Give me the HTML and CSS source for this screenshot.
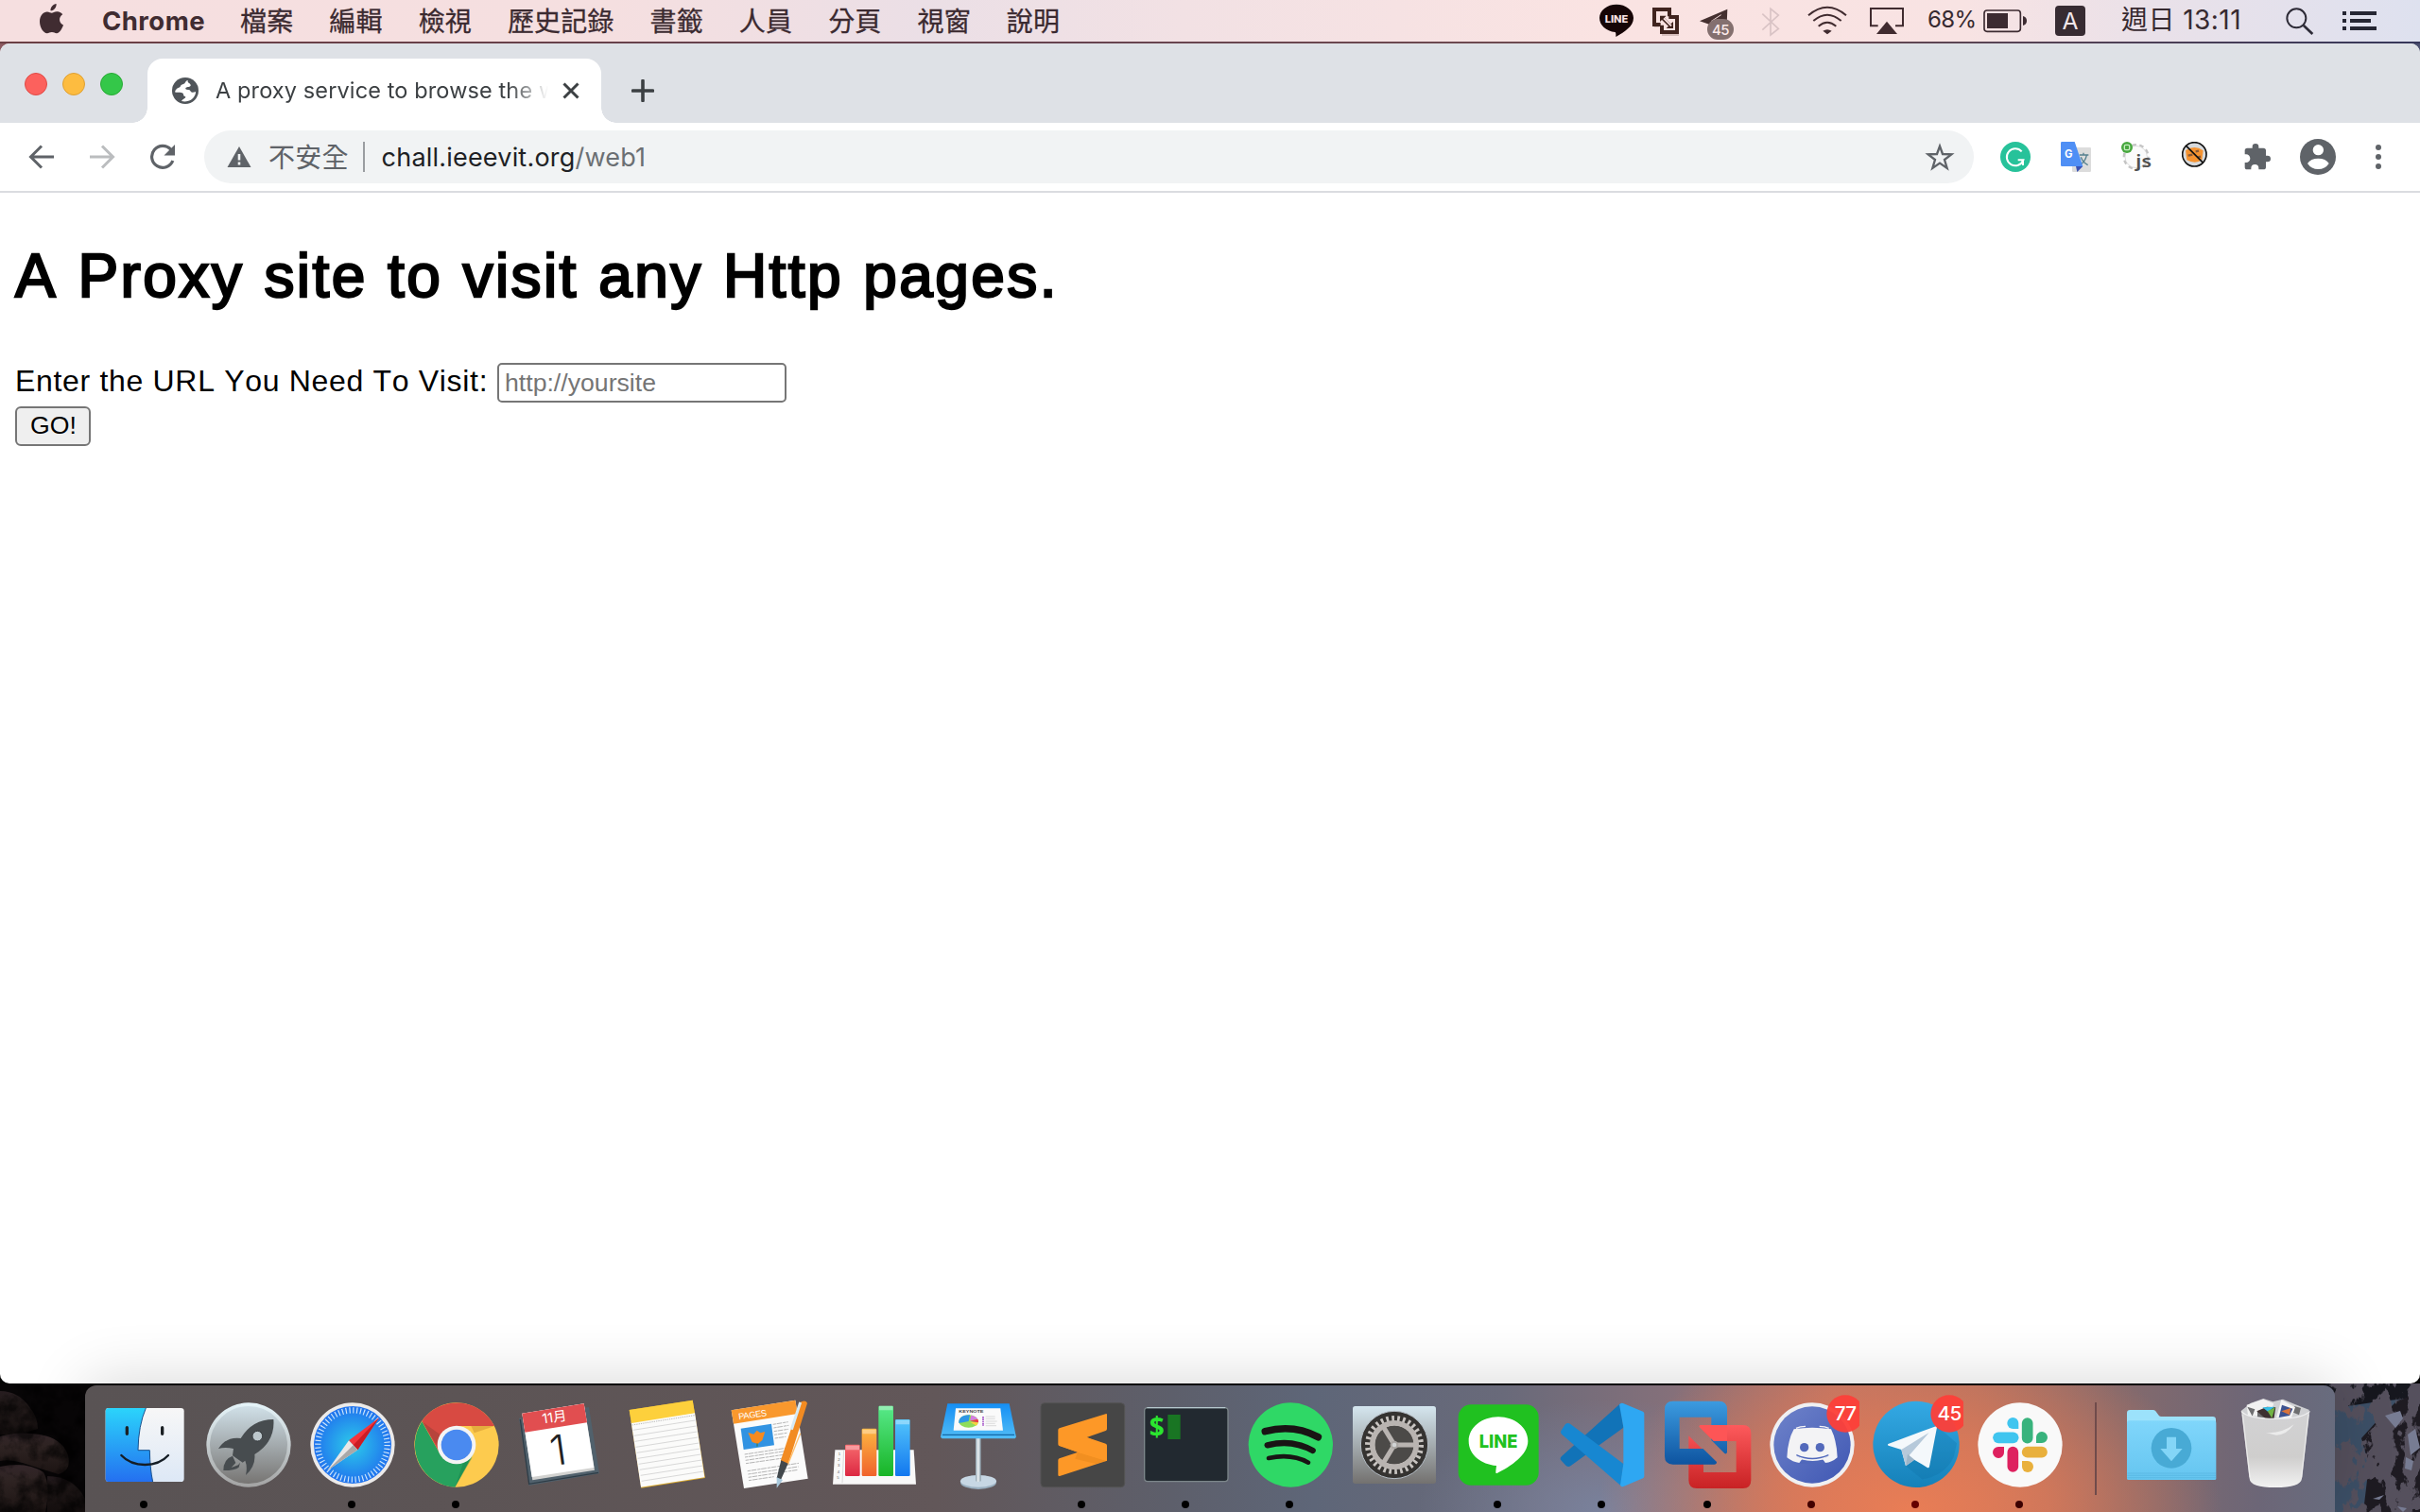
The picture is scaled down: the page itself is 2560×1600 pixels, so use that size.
FILE: index.html
```html
<!DOCTYPE html>
<html lang="zh-Hant">
<head>
<meta charset="utf-8">
<title>A proxy service to browse the web</title>
<link rel="stylesheet" href="styles.css">
</head>
<body>
<header class="menubar">
  <nav class="menus">
    <svg class="apple" width="25" height="32" viewBox="0 0 25 32"><path d="M17.6 0c.3 3.800-2.500 7.400-6.100 7.300C11.100 3.700 14.300.4 17.600 0zM12.700 9.700c1.300 0 3.200-1.700 6-1.500 2.300.1 4.400 1.300 5.500 3.100-4.600 2.900-4 9.300.8 11.300-.9 3-3.800 8.600-7.100 8.700-1.900 0-2.700-1.200-5-1.200s-3.200 1.200-5 1.200C3.700 31.200 0 24.600 0 18.800c0-6.600 4-10.300 7.900-10.400 2 0 3.700 1.300 4.800 1.300z" fill="#402c31"/></svg>
    <span class="app-name">Chrome</span>
    <span class="menu">檔案</span><span class="menu">編輯</span><span class="menu">檢視</span><span class="menu">歷史記錄</span><span class="menu">書籤</span><span class="menu">人員</span><span class="menu">分頁</span><span class="menu">視窗</span><span class="menu">說明</span>
  </nav>
  <div class="status">
    <svg width="60" height="44" viewBox="60 0 180 132"><path d="M150 14c30 0 54 19 54 43 0 27-29 44-56 60 0-6 1-12-2-15-29-3-50-22-50-45 0-24 24-43 54-43z" fill="#160506"/><text x="150" y="71" text-anchor="middle" class="line-mini" textLength="74" lengthAdjust="spacingAndGlyphs">LINE</text></svg>
    <svg width="44" height="44" viewBox="240 0 132 132"><path d="M270 84h16M294 111h54" stroke="#40241f" opacity=".25" stroke-width="5"/><g fill="none" stroke="#40241f" stroke-width="12"><path d="M318 52V30H270V78H290M316 54H342V102H294V80"/></g><path d="M288 50h20l-6 6 20 20 8-7v21h-22l7-7-21-20-6 6z" fill="#40241f"/><path d="M300 58l24 24" stroke="#f9e2e2" stroke-width="6"/></svg>
    <svg width="66" height="44" viewBox="372 0 198 132"><path d="M414 67l88-38-2 48-30-15-26 15z" fill="#45302f"/><path d="M450 68l32-21" stroke="#f9e2e2" stroke-width="3"/><rect x="438" y="60" width="84" height="66" rx="33" fill="#84706f"/><text x="480" y="110" text-anchor="middle" class="tg-mini">45</text></svg>
    <svg width="46" height="44" viewBox="570 0 138 132"><path d="M613 44l51 47-25 20V28l25 20-51 47" fill="none" stroke="#d9c3c5" stroke-width="5"/></svg>
    <svg width="70" height="44" viewBox="708 0 210 132"><g fill="none" stroke="#402b2f" stroke-width="6"><path d="M759 49q60-51 120 0M775 66q44-38 88 0M791 83q28-24 56 0"/></g><path d="M805 98q14-9 28 0l-14 11z" fill="#402b2f"/></svg>
    <svg width="60" height="44" viewBox="918 0 180 132"><path d="M980 82H957V27h102v55h-24" fill="none" stroke="#402b2f" stroke-width="6"/><path d="M1008 68l33 40h-66z" fill="#402b2f"/></svg>
    <span class="percent">68%</span>
    <svg width="60" height="44" viewBox="-30 0 180 132"><rect x="-3" y="33" width="115" height="67" rx="9" fill="none" stroke="#3c2b31" stroke-width="5"/><rect x="6" y="42" width="66" height="48" fill="#3c2b31"/><path d="M120 51q12 3 12 15t-12 15z" fill="#3c2b31"/></svg>
    <svg class="input-src" width="60" height="44" viewBox="180 0 180 132"><rect x="222" y="18" width="96" height="96" rx="12" fill="#372b32"/><text x="270" y="94" text-anchor="middle" class="src-letter">A</text></svg>
    <span class="clock">週日 13:11</span>
    <svg width="60" height="44" viewBox="900 0 180 132"><circle cx="988" cy="58" r="30" fill="none" stroke="#2d2b37" stroke-width="6"/><path d="M1010 80l29 28" stroke="#2d2b37" stroke-width="8"/></svg>
    <svg width="70" height="44" viewBox="1080 0 210 132"><path d="M1134 42h12M1158 42h84M1134 66h12M1158 66h66M1134 90h12M1158 90h84" stroke="#252633" stroke-width="12"/></svg>
  </div>
</header>

<div class="window-wrap">
<main class="window">
  <div class="tabstrip">
    <div class="lights"><i class="light red"></i><i class="light amber"></i><i class="light green"></i></div>
    <div class="tab">
      <svg width="28" height="28" viewBox="0 0 28 28"><circle cx="14" cy="14" r="14" fill="#50555a"/><path d="M17 3c-3 .5-2.500 2.500-4 3.500-1.500 1-3.500.5-4 2.500-.4 1.500-2 1.500-3.500 2.500-1.500 1.200-2.500 2.500-2.300 4 2 .6 6.500-.5 8.300 1.200 1.300 1.300 0 2.600 1.500 3 2 .4 1.500 1.500.3 2.300-1.500 1-2.300 1.500-3.300 3 6 1.500 11-1 13.500-5 1-1.500 1.500-3 1.500-5-1.500.5-3 1.300-4.500.4-1.300-.8-1-2.400-3.500-2.400s-3.500-1-2.300-2.200c1.300-1.300 4.500-.3 5-2.300.3-1.400-1-2-2-2.800-1-.7-1.500-1.500-.7-2.700z" fill="#fff"/></svg>
      <span class="tab-title">A proxy service to browse the w</span>
      <svg width="18" height="18" viewBox="0 0 18 18"><path d="M1.500 1.500l15 15M16.500 1.500l-15 15" stroke="#3c4043" stroke-width="3"/></svg>
    </div>
    <svg class="newtab" width="24" height="24" viewBox="0 0 24 24"><path d="M12 1.500v21M1.500 12h21" stroke="#3c4043" stroke-width="3.600" stroke-linecap="round"/></svg>
  </div>
  <div class="toolbar">
    <div class="navs">
      <svg width="28" height="28" viewBox="0 0 28 28"><path d="M27 14H3M14 2.500L2.500 14 14 25.500" fill="none" stroke="#5f6368" stroke-width="3"/></svg>
      <svg width="28" height="28" viewBox="0 0 28 28"><path d="M1 14h24M14 2.500L25.500 14 14 25.500" fill="none" stroke="#bbbdbf" stroke-width="3"/></svg>
      <svg width="28" height="28" viewBox="0 0 28 28"><path d="M22.800 6.300A11.500 11.500 0 1 0 24.800 18" fill="none" stroke="#5f6368" stroke-width="3.200"/><path d="M27 1v11.500H15.500z" fill="#5f6368"/></svg>
    </div>
    <div class="omnibox">
      <svg width="26" height="22" viewBox="0 0 26 22"><path d="M13 0l12.500 22H.5z" fill="#5f6368"/><path d="M13 8v6.500M13 16.500v3" stroke="#f1f3f4" stroke-width="2.600"/></svg>
      <span class="insecure">不安全</span>
      <i class="sep"></i>
      <span class="url">chall.ieeevit.org<span class="path">/web1</span></span>
      <svg class="star" width="32" height="32" viewBox="1128 450 96 96"><path d="M1176 464l9 25 28 1-22 17 8 27-23-16-23 16 8-27-22-17 28-1z" fill="none" stroke="#5f6368" stroke-width="7"/></svg>
    </div>
    <div class="exts">
      <svg width="32" height="32" viewBox="48 450 96 96"><circle cx="96" cy="498" r="48" fill="#27c29a"/><path d="M116 481a27 27 0 1 0 5 27H104" fill="none" stroke="#fff" stroke-width="6"/><path d="M120 508v17" stroke="#fff" stroke-width="6"/></svg>
      <svg width="32" height="32" viewBox="240 450 96 96"><rect x="276" y="468" width="60" height="78" rx="4" fill="#dcdcdc"/><path d="M299 492h29M312 485v7M322 493q-4 20-22 31M304 499q6 17 22 25" fill="none" stroke="#55808f" stroke-width="4"/><path d="M244 450h40l26 78h-66q-4 0-4-4v-70q0-4 4-4z" fill="#4f8ff5"/><path d="M288 528h22l-18 18z" fill="#3a52b5"/><text x="252" y="501" class="g-letter">G</text></svg>
      <svg width="32" height="32" viewBox="432 450 96 96"><circle cx="479" cy="498" r="37" fill="#fbfbfb" stroke="#c4c4c4" stroke-width="10" stroke-dasharray="13 10"/><circle cx="479" cy="498" r="35" fill="#fbfbfb" stroke="#d0d0d0" stroke-width="2"/><circle cx="450" cy="468" r="18" fill="#48a83f"/><rect x="442" y="460" width="16" height="16" rx="4" fill="none" stroke="#c8efc2" stroke-width="4"/><text x="478" y="532" class="js-letter" textLength="50" lengthAdjust="spacingAndGlyphs">js</text></svg>
      <svg width="32" height="32" viewBox="624 450 96 96"><circle cx="664" cy="490" r="38" fill="#d7dadd" stroke="#111" stroke-width="5"/><path d="M636 478q28-20 56 0l-4 30q-22 14-48 0z" fill="#f59331"/><path d="M644 494l14-3M674 500l10-3M668 481l10-2" stroke="#8b5a35" stroke-width="7"/><path d="M638 463l54 54" stroke="#111" stroke-width="5"/></svg>
      <svg width="32" height="32" viewBox="816 450 96 96"><path d="M832 470h16v-4a10 10 0 0 1 20 0v4h15q8 0 8 8v16h5a10 10 0 0 1 0 20h-5v16q0 8-8 8h-15v-4a12 12 0 0 0-24 0v4h-13q-7 0-7-8v-14h4a13 13 0 0 0 0-26h-4v-12q0-8 8-8z" fill="#5f6368"/></svg>
      <svg width="38" height="38" viewBox="999 441 114 114"><circle cx="1056" cy="498" r="57" fill="#5f6368"/><circle cx="1057" cy="476" r="17" fill="#fff"/><path d="M1023 519q10-16 34-16t34 16q-12 18-34 18t-34-18z" fill="#fff"/></svg>
      <svg width="8" height="32" viewBox="1236 450 24 96"><g fill="#5f6368"><circle cx="1248" cy="468" r="9"/><circle cx="1248" cy="498" r="9"/><circle cx="1248" cy="528" r="9"/></g></svg>
    </div>
  </div>
  <section class="page">
    <h1>A Proxy site to visit any Http pages.</h1>
    <form class="visit">
      <label for="site">Enter the URL You Need To Visit:</label>
      <input id="site" type="text" placeholder="http://yoursite">
    </form>
    <button class="go" type="button">GO!</button>
  </section>
</main>
</div>

<footer class="dock-area">
  <svg class="wallpaper" width="2560" height="136" viewBox="0 0 2560 136">
    <defs>
      <filter id="grain" x="0" y="0" width="100%" height="100%"><feTurbulence type="fractalNoise" baseFrequency=".045 .03" numOctaves="5" seed="4"/><feColorMatrix values="0 0 0 0 .09  0 0 0 0 .08  0 0 0 0 .11  24 0 0 0 -10.800"/></filter>
      <filter id="dust" x="0" y="0" width="100%" height="100%"><feTurbulence type="fractalNoise" baseFrequency=".05" numOctaves="5" seed="9"/><feColorMatrix values="0 0 0 0 0  0 0 0 0 0  0 0 0 0 0  3 0 0 0 -1.200"/></filter>
      <linearGradient id="rock" x2="0" y2="1"><stop offset="0" stop-color="#33262a"/><stop offset=".3" stop-color="#2f2423"/><stop offset="1" stop-color="#1d1514"/></linearGradient>
    </defs>
    <rect width="2560" height="136" fill="#080607"/>
    <g fill="url(#rock)"><path d="M0 8q20 0 32 18 8 10 8 22l-20 6-20 0z" opacity=".7"/><path d="M0 56q20-6 42-2 24 4 30 22 4 16-10 20-20-6-38-12-14-4-24-2z"/><path d="M0 88q28-6 46 6 8 14 2 42H0z"/><path d="M50 98q28 0 40 24v14H50z" opacity=".6"/></g>
    <rect width="90" height="136" filter="url(#dust)" opacity=".6"/>
    <rect x="2460" width="100" height="136" fill="#3c4f66"/>
    <path d="M2460 0h100v14l-50 6-40 6h-10z" fill="#16171e"/>
    <path d="M2500 136l6-50-8-28 18-20 20-20 24-8v126z" fill="#1e1b22"/>
    <rect x="2460" width="100" height="136" filter="url(#grain)"/>
    <path d="M2523 34l16-5 3 8-8 10zM2547 54l8-6 5 20-10 8zM2545 78l8 4-2 10-7-2zM2510 122l12-4-5 5zM2536 130l10 2-4 4z" fill="#777c93"/>
  </svg>
  <div class="dock">
    <svg class="icon" viewBox="291 78 330 402"><defs><linearGradient id="fa" x2="0" y2="1"><stop stop-color="#2bd4fb"/><stop offset="1" stop-color="#2470f0"/></linearGradient><linearGradient id="fb" x2="0" y2="1"><stop stop-color="#f7f7f7"/><stop offset="1" stop-color="#dde8f6"/></linearGradient></defs><rect x="335" y="150" width="249" height="234" rx="10" fill="url(#fb)"/><path d="M463 150q-24 56-25 134h37q1 60 10 100H345q-10 0-10-10V160q0-10 10-10z" fill="url(#fa)"/><path d="M463 150q-24 56-25 134h37q1 60 10 100" fill="none" stroke="#17518e" stroke-width="3"/><path d="M403 212v20M515 212v20" stroke="#1b2024" stroke-width="10" stroke-linecap="round"/><path d="M385 300q28 30 75 30t74-30" fill="none" stroke="#151d25" stroke-width="7" stroke-linecap="round"/><circle cx="456" cy="456" r="12"/></svg>
    <svg class="icon" viewBox="621 78 330 402"><defs><linearGradient id="la" x2="0" y2="1"><stop stop-color="#d0e0e8"/><stop offset="1" stop-color="#777573"/></linearGradient><linearGradient id="lb" x2="0" y2="1"><stop stop-color="#e6f5fa"/><stop offset="1" stop-color="#a3a3a3"/></linearGradient></defs><circle cx="789" cy="267" r="134" fill="url(#lb)"/><circle cx="789" cy="267" r="123" fill="url(#la)"/><path d="M868 186q-68 0-104 60-46-6-71 33 22-6 48 0l-3 22 32 22 8-6q8 20 2 46 32-30 28-66 66-40 60-111z" fill="#474c4f"/><path d="M738 302l10 22-14 15 22-8 6-8-4 15q-12 10-49 10 0-36 29-46z" fill="#474c4f"/><circle cx="817" cy="239" r="16" fill="#bcc7cc" stroke="#373c3f" stroke-width="3"/></svg>
    <svg class="icon" viewBox="951 78 330 402"><defs><radialGradient id="sa"><stop stop-color="#2ccbea"/><stop offset="1" stop-color="#2072ee"/></radialGradient></defs><circle cx="1119" cy="267" r="134" fill="#eceae9"/><circle cx="1119" cy="267" r="123" fill="url(#sa)"/><circle cx="1119" cy="267" r="110" fill="none" stroke="#cfe6fb" stroke-width="19" stroke-dasharray="3.500 8.020"/><path d="M1203 181l-68 102-28-30z" fill="#f2353c"/><path d="M1203 181l-68 102-14-15z" fill="#ca1c24"/><path d="M1039 348l96-65-28-30z" fill="#e9e7e6"/><path d="M1039 348l96-65-14-15z" fill="#a9a8a8"/><circle cx="1116" cy="456" r="12"/></svg>
    <svg class="icon" viewBox="-9 78 330 402"><circle cx="159" cy="267" r="134" fill="#fdcb4e"/><path d="M159 207H279A134 134 0 0 0 49 191L107 297z" fill="#d84a42"/><path d="M49 193A134 134 0 0 0 154 401L211 297 107 297z" fill="#27a15e"/><path d="M49 193l55 88 12-40z" fill="#7c3931" opacity=".35"/><path d="M205 207h74l-64 22z" fill="#d39a34" opacity=".6"/><path d="M154 401l55-94-30 20z" fill="#137c47" opacity=".4"/><circle cx="159" cy="267" r="61" fill="#f4f4f4"/><circle cx="159" cy="267" r="49" fill="#4a8af0"/><circle cx="156" cy="456" r="12"/></svg>
    <svg class="icon" viewBox="321 78 330 402"><path d="M357 182l222-35 33 211-223 38z" fill="#51616c"/><path d="M361 186l28 205 220-36" fill="none" stroke="#2e3c46" stroke-width="4"/><path d="M367 167l196-31 34 211-197 32z" fill="#d2d2d0"/><path d="M367 167l196-31 32 203-197 30z" fill="#fff"/><path d="M367 167l196-31 10 60-197 31z" fill="#e14e50"/><text transform="translate(471 194) rotate(-8)" text-anchor="middle" class="cal-month">11月</text><text transform="translate(488 330) rotate(-8)" text-anchor="middle" class="cal-day">1</text></svg>
    <svg class="icon" viewBox="651 78 330 402"><path d="M707 156l201-31 40 247-203 32z" fill="#d9a92c"/><path d="M713 194l202-30 31 206-202 31z" fill="#fbfbfa"/><path d="M707 156l201-31 7 41-201 32z" fill="#fdd03c"/><path d="M716 204l198-31" stroke="#999" stroke-width="2" stroke-dasharray="4 3"/><path d="M719 220l197-31m-194 49l197-31m-194 49l197-31m-194 49l197-31m-194 49l197-31m-194 49l197-31m-194 49l197-31m-194 49l197-31m-194 49l197-31m-194 49l197-31" stroke="#c5c5c5" stroke-width="2"/></svg>
    <svg class="icon" viewBox="981 78 330 402"><path d="M1031 157l203-32 40 249-203 31z" fill="#fbfbfb"/><path d="M1031 157l203-32 7 43-203 32z" fill="#f9982d"/><text transform="translate(1055 187) rotate(-8)" class="pages-text">PAGES</text><path d="M1061 215l97-15 9 68-97 14z" fill="#3293e2"/><path d="M1084 228l18 5 10-12 11 8 15-4-9 27-14 12-18-6z" fill="#f68a20"/><path d="M1113 262v10" stroke="#367b3e" stroke-width="3"/><g stroke="#b5b5b5" stroke-width="3" stroke-dasharray="10 2 17 3"><path d="M1163 202l48-8m-46 19l48-8m-47 19l46-7m-45 18l40-6m-38 17l35-5M1073 297l139-21m-138 30l133-20m-131 30l128-19m-127 29l118-17M1082 350l163-25m-161 35l160-24m-159 34l158-24m-157 34l80-12"/></g><path d="M1248 132q18-10 24 2l-61 195-24-10z" fill="#f28b22"/><path d="M1250 132l-28 86" stroke="#d6eaf5" stroke-width="9"/><path d="M1250 230l-39 98" stroke="#ffc06e" stroke-width="4"/><path d="M1189 316l22 10-23 52-13-6z" fill="#42484c"/><path d="M1175 370l19 8-19 26z" fill="#a9c9dc"/></svg>
    <svg class="icon" viewBox="21 78 330 402"><defs><linearGradient id="n1" x2="0" y2="1"><stop stop-color="#f66a6d"/><stop offset="1" stop-color="#dc2842"/></linearGradient><linearGradient id="n2" x2="0" y2="1"><stop stop-color="#fdb742"/><stop offset="1" stop-color="#f0622b"/></linearGradient><linearGradient id="n3" x2="0" y2="1"><stop stop-color="#58e98a"/><stop offset="1" stop-color="#18b426"/></linearGradient><linearGradient id="n4" x2="0" y2="1"><stop stop-color="#53c5fb"/><stop offset="1" stop-color="#1277ef"/></linearGradient></defs><path d="M70 283h250l7 109H63z" fill="#f8f8f8"/><path d="M98 284l-5 104" stroke="#ccc" stroke-width="2"/><text class="tiny-num"><tspan x="80" y="299">1</tspan><tspan x="79" y="318">2</tspan><tspan x="78" y="337">3</tspan><tspan x="77" y="356">4</tspan><tspan x="76" y="375">5</tspan></text><rect x="102" y="266" width="47" height="100" rx="4" fill="url(#n1)"/><rect x="155" y="215" width="47" height="151" rx="4" fill="url(#n2)"/><rect x="208" y="143" width="47" height="223" rx="4" fill="url(#n3)"/><rect x="261" y="186" width="47" height="180" rx="4" fill="url(#n4)"/><path d="M104 276h43M157 225h43M210 150h43M263 195h43" stroke="#fff" opacity=".35" stroke-width="14"/></svg>
    <svg class="icon" viewBox="351 78 330 402"><defs><linearGradient id="ka" x2="0" y2="1"><stop stop-color="#158ff5"/><stop offset="1" stop-color="#52bdf5"/></linearGradient><linearGradient id="kb"><stop stop-color="#8fa2ae"/><stop offset=".5" stop-color="#eef3f6"/><stop offset="1" stop-color="#8598a4"/></linearGradient></defs><ellipse cx="525" cy="386" rx="57" ry="22" fill="#99afc0"/><ellipse cx="525" cy="382" rx="57" ry="19" fill="#c7d7e4"/><path d="M516 246h17v136q-8 4-17 0z" fill="url(#kb)"/><path d="M427 136h196l22 106-4 5H410l-5-5z" fill="url(#ka)"/><path d="M411 235h228" stroke="#1268a9" stroke-width="4"/><path d="M453 151h142l8 70H446z" fill="#fafafa"/><text x="463" y="164" class="keynote-text" textLength="78" lengthAdjust="spacingAndGlyphs">KEYNOTE</text><ellipse cx="494" cy="192" rx="31" ry="20" fill="#8edc5b"/><path d="M494 192l-31 6q-3-25 35-26z" fill="#2e97e6"/><path d="M498 190l4-17q18 4 20 12z" fill="#d67be2"/><path d="M498 191l25-6q3 6 2 11z" fill="#ef3849"/><path d="M498 194l27 2-6 10z" fill="#f6d340"/><path d="M540 177v30" stroke="#b06bd0" stroke-width="6" stroke-dasharray="5 2"/><path d="M548 177h30m-30 7h30m-30 8h36m-36 7h30m-30 7h34" stroke="#ccc" stroke-width="2"/></svg>
    <svg class="icon" viewBox="681 78 330 402"><rect x="723" y="134" width="266" height="267" rx="12" fill="#464646" stroke="#535353" stroke-width="3"/><path d="M931 168q2 0 2 4v44q0 4-4 6l-60 21 60 20q4 2 4 6v48l-150 49q-5 1-5-4v-46q0-4 4-6l59-20-58-19q-5-2-5-6v-45q0-4 4-6z" fill="#fd9827"/><path d="M840 290l92 28-34 9-66-16z" fill="#d97d18" opacity=".35"/><path d="M779 268l61 22 92 28v-49l-63-26-40 14z" fill="#fd9827"/><circle cx="852" cy="456" r="12"/></svg>
    <svg class="icon" viewBox="1011 78 330 402"><rect x="1052" y="149" width="265" height="234" rx="10" fill="#222930" stroke="#7c868a" stroke-width="4"/><path d="M1060 149h249" stroke="#b5c8cd" stroke-width="4"/><text x="1067" y="239" class="term">$</text><rect x="1126" y="171" width="40" height="78" fill="#197523"/><circle cx="1182" cy="456" r="12"/></svg>
    <svg class="icon" viewBox="51 78 330 402"><circle cx="226" cy="267" r="134" fill="#2fd866"/><g fill="none" stroke="#191414" stroke-linecap="round"><path d="M145 224q90-24 168 18" stroke-width="23"/><path d="M152 268q78-20 144 17" stroke-width="19"/><path d="M156 309q72-16 126 14" stroke-width="14"/></g><circle cx="222" cy="456" r="12"/></svg>
    <svg class="icon" viewBox="381 78 330 402"><defs><linearGradient id="ga" x2="0" y2="1"><stop stop-color="#d5e6ef"/><stop offset="1" stop-color="#73716f"/></linearGradient></defs><rect x="423" y="144" width="264" height="246" rx="8" fill="url(#ga)"/><circle cx="555" cy="267" r="107" fill="#353331" stroke="#b3bbc3" stroke-width="3"/><circle cx="555" cy="267" r="84" fill="none" stroke="#c8c4c1" stroke-width="18" stroke-dasharray="8 9.590"/><circle cx="555" cy="267" r="69" fill="none" stroke="#b9b4b1" stroke-width="18"/><circle cx="555" cy="267" r="61" fill="#4c4a48"/><path d="M555 267h66M555 267l-34-56M555 267l-34 56" stroke="#b9b4b1" stroke-width="15"/><circle cx="555" cy="267" r="13" fill="#aaa6a3"/><circle cx="555" cy="267" r="7" fill="#d2d4d5"/></svg>
    <svg class="icon" viewBox="711 78 330 402"><rect x="758" y="139" width="255" height="256" rx="40" fill="#20c120"/><path d="M885 178c52 0 94 34 94 77 0 44-54 80-98 102-6 2-4-6-2-24-48-4-88-34-88-78 0-43 42-77 94-77z" fill="#fff"/><text x="885" y="276" text-anchor="middle" class="line-big" textLength="122" lengthAdjust="spacingAndGlyphs">LINE</text><circle cx="882" cy="456" r="12"/></svg>
    <svg class="icon" viewBox="1041 78 330 402"><path d="M1272 136l10 76-168 122q-7 4-14-1l-16-17q-5-7 2-13z" fill="#1173b8"/><path d="M1098 201q8-6 16 0l168 126-8 70-188-164q-6-7 0-14z" fill="#1787d1"/><path d="M1281 135q-8-2-12 4l13 72v116l-10 68q4 6 10 4l62-26q4-2 4-7V168q0-5-4-7z" fill="#2ea7f2"/><circle cx="1212" cy="456" r="12"/></svg>
    <svg class="icon" viewBox="81 78 330 402"><defs><linearGradient id="va" x2="0" y2="1"><stop stop-color="#3c9be0"/><stop offset="1" stop-color="#0e54a0"/></linearGradient><linearGradient id="vb" x2="0" y2="1"><stop stop-color="#fd5a5c"/><stop offset="1" stop-color="#c82224"/></linearGradient></defs><path d="M199 238l42 41h5v75h104v-99h-72l-46-46q0-5 8-5h131q26 0 26 26v149q0 26-26 26H225q-26 0-26-26z" fill="url(#vb)"/><path d="M149 128h146q26 0 26 26v136q-2 8-8 4l-42-42v-73H170v100h75l43 42q0 8-8 8H149q-26 0-26-26V154q0-26 26-26z" fill="url(#va)"/><path d="M233 207q2-3 6-3h82v51h-43z" fill="#fd5556"/><circle cx="258" cy="456" r="12"/></svg>
    <svg class="icon" viewBox="411 78 330 402"><defs><linearGradient id="da" x2="1" y2="1"><stop stop-color="#6f83ca"/><stop offset="1" stop-color="#3f57b3"/></linearGradient></defs><circle cx="591" cy="267" r="134" fill="#f0f0f2"/><circle cx="591" cy="267" r="122" fill="url(#da)"/><path d="M533 217q58-10 118 0 18 36 20 90-18 16-38 17l-9-12 17-9q-50 18-98 0l16 9-9 12q-20-2-39-17 2-54 22-90z" fill="#f3f3f5"/><path d="M540 214q12-6 30-6M644 214q-12-6-30-6M540 298q50 26 104 0" fill="none" stroke="#f3f3f5" stroke-width="4"/><path d="M541 298q50 24 102 0l-14 15q-36 10-74 0z" fill="#f3f3f5"/><path d="M541 299q50 23 102 0" fill="none" stroke="#5068bb" stroke-width="4"/><path d="M560 316q32 6 64 0l8 10h-80z" fill="#5068bb"/><circle cx="566" cy="275" r="14" fill="#5369bb"/><circle cx="616" cy="275" r="14" fill="#5369bb"/><circle cx="696" cy="168" r="59" fill="#fc3f39" opacity=".96"/><text x="696" y="190" text-anchor="middle" class="badge">77</text><circle cx="588" cy="456" r="12" fill="#420000"/></svg>
    <svg class="icon" viewBox="741 78 330 402"><defs><linearGradient id="ta" x2="0" y2="1"><stop stop-color="#34a9e4"/><stop offset="1" stop-color="#1581b9"/></linearGradient></defs><circle cx="921" cy="265" r="137" fill="url(#ta)"/><path d="M888 334l52 42q70-10 100-70l10-44-62-54z" fill="#0b6c9f" opacity=".25"/><path d="M832 264l156-58-25 130q-2 6-8 2l-40-24-27 20-14-52-41-13q-4-2-1-5z" fill="#f4f8fb"/><path d="M874 282l88-54-66 76-8 30z" fill="#b6c9da"/><path d="M894 296l22 18-28 20z" fill="#9db5c8"/><circle cx="1026" cy="168" r="59" fill="#fc3f39" opacity=".96"/><text x="1026" y="190" text-anchor="middle" class="badge">45</text><circle cx="918" cy="456" r="12" fill="#640000"/></svg>
    <svg class="icon" viewBox="1071 78 330 402"><circle cx="1251" cy="267" r="134" fill="#f9f9f9"/><g stroke-width="35" stroke-linecap="round"><path d="M1182 244h47" stroke="#40c5ef"/><path d="M1274 198v47" stroke="#39b37d"/><path d="M1274 290h46" stroke="#e9b03c"/><path d="M1228 290v46" stroke="#de215f"/></g><path d="M1246 216h-18a18 18 0 1 1 18-18z" fill="#40c5ef"/><path d="M1302 261v-17a18 18 0 1 1 18 17z" fill="#39b37d"/><path d="M1257 318h18a18 18 0 1 1-18 18z" fill="#e9b03c"/><path d="M1200 273v17a18 18 0 1 1-18-17z" fill="#de215f"/><circle cx="1248" cy="456" r="12" fill="#3c0000"/></svg>
    <i class="divider"></i>
    <svg class="icon" viewBox="186 78 330 402"><defs><linearGradient id="da2" x2="0" y2="1"><stop stop-color="#80d6fb"/><stop offset="1" stop-color="#65c5f0"/></linearGradient></defs><path d="M220 156h72q6 0 9 4l10 13q3 4 8 4h163q10 0 10 10v40H210v-61q0-10 10-10z" fill="#9ce2fb"/><path d="M218 190h268q7 0 7 8v176q0 4-5 4H215q-5 0-5-4V198q0-8 8-8z" fill="url(#da2)"/><path d="M211 357h281M211 364h281M211 371h281" stroke="#55b3de" stroke-width="2"/><circle cx="351" cy="277" r="64" fill="#48aad5"/><path d="M336 242h30v37h20l-35 40-35-40h20z" fill="#83d5f7"/></svg>
    <svg class="icon" viewBox="516 78 330 402"><defs><linearGradient id="tr" x2="0" y2="1"><stop stop-color="#d2d2d4"/><stop offset=".6" stop-color="#cfcecd"/><stop offset="1" stop-color="#f2f2f2"/></linearGradient></defs><path d="M573 158l30-24 40-14 30 10 32-8 38 16 46 18-20 30H594z" fill="#cfd0d3"/><path d="M590 140l52-18 34 14-16 42-66-4z" fill="#f1f1f1"/><path d="M592 146l24 8-8 22zM624 162l24-6 10 26-34-4zM742 144l20 6-6 22-18-8z" fill="#6e6e70"/><path d="M622 160l32-14 28 2-6 38-26-2z" fill="#3d3030"/><path d="M640 148l38-2-20 16z" fill="#36bde4"/><path d="M656 160l24-12-10 34z" fill="#71b344"/><path d="M700 124l44 24-14 38-46-6z" fill="#f3f3f3"/><path d="M702 140l34 12-10 22-34 6z" fill="#3c5290"/><path d="M700 160l30-10-4 22z" fill="#d9743a"/><path d="M573 160q20 24 108 24t109-24l-25 214q-4 28-84 28t-82-28z" fill="url(#tr)"/><path d="M573 160q20 24 108 24t109-24" fill="none" stroke="#f0f0f1" stroke-width="4"/><path d="M650 228q50 4 90-26-24 34-56 34z" fill="#ebebeb"/><path d="M577 170l23 200M786 170l-22 200" stroke="#f3f3f3" stroke-width="4" opacity=".7"/></svg>
  </div>
</footer>
</body>
</html>
```
FILE: styles.css
```css
* { box-sizing: border-box; }
body {
  margin: 0;
  width: 2560px;
  height: 1600px;
  overflow: hidden;
  display: flex;
  flex-direction: column;
  background: #000;
  font-family: Inter, "Noto Sans CJK TC", sans-serif;
}
svg { display: block; flex: none; }

/* menu bar */
.menubar {
  flex: none;
  height: 46px;
  padding-bottom: 2px;
  display: flex;
  justify-content: space-between;
  background:
    linear-gradient(90deg, #f6dfe0 0, #f5dfe0 650px, #ebdfe6 980px, #f2e1e4 1250px, #fae3e2 1700px, #f8e3e3 2080px, #eae1e9 2270px, #dee1ef 2560px) top / 100% 44px no-repeat,
    linear-gradient(90deg, #6b3f44, #65414e 1000px, #704c50 1800px, #36375a 2560px);
}
.menus, .status { display: flex; align-items: center; height: 44px; }
.menus { padding-left: 42px; }
.apple { margin-top: -5px; }
.app-name {
  width: 110px;
  margin-left: 41px;
  margin-right: 17px;
  font-size: 27.5px;
  font-weight: 700;
  letter-spacing: .45px;
  line-height: 44px;
  color: #402c31;
}
.menu {
  padding: 0 19px;
  font: 400 28px/42px "Noto Sans CJK TC", sans-serif;
  height: 44px;
  letter-spacing: .15px;
  color: #3b2a30;
  -webkit-text-stroke: .3px #3b2a30;
  white-space: nowrap;
}
.status { padding-right: 30px; color: #372a30; white-space: nowrap; }
.percent { width: 52px; margin-left: 13px; margin-right: -1px; font-size: 24px; letter-spacing: -.6px; line-height: 42px; height: 44px; }
.input-src { margin-left: 10px; }
.clock {
  width: 156px;
  height: 44px;
  margin-left: 24px;
  font: 400 28px/42px Inter, "Noto Sans CJK TC", sans-serif;
  letter-spacing: .45px;
}
.line-mini { font: 800 31px Inter, sans-serif; fill: #f9e2e2; }
.tg-mini { font: 500 45px Inter, sans-serif; fill: #fbe9e8; letter-spacing: -2px; }
.src-letter { font: 400 74px Inter, sans-serif; fill: #f2e6ea; }

/* browser window */
.window-wrap { flex: none; height: 1418px; background: linear-gradient(90deg, #8b5a60, #4b5070) top / 100% 30px no-repeat, #050505; }
.window { height: 1418px; border-radius: 10px; overflow: hidden; background: #fff; }
.tabstrip { height: 84px; display: flex; align-items: flex-end; background: #dee1e6; }
.lights { width: 156px; height: 84px; padding: 31px 0 0 26px; display: flex; gap: 16px; }
.light { width: 24px; height: 24px; border-radius: 50%; border: 1px solid; }
.red { background: #fc615d; border-color: #e04a45; }
.amber { background: #fdbc40; border-color: #dea033; }
.green { background: #34c749; border-color: #29ab35; }
.tab {
  position: relative;
  width: 480px;
  height: 68px;
  padding: 0 24px 0 26px;
  border-radius: 16px 16px 0 0;
  display: flex;
  align-items: center;
  background: #fff;
}
.tab::before, .tab::after { content: ""; position: absolute; bottom: 0; width: 16px; height: 16px; }
.tab::before { left: -16px; background: radial-gradient(circle at 0 0, transparent 15.5px, #fff 16px); }
.tab::after { right: -16px; background: radial-gradient(circle at 100% 0, transparent 15.5px, #fff 16px); }
.tab-title {
  width: 354px;
  margin: 0 13px 2px 18px;
  white-space: nowrap;
  font-size: 23.5px;
  letter-spacing: .12px;
  color: #3c4043;
  -webkit-mask-image: linear-gradient(90deg, #000 310px, transparent 352px);
  mask-image: linear-gradient(90deg, #000 310px, transparent 352px);
}
.newtab { margin: 0 0 22px 32px; }
.toolbar { height: 74px; border-bottom: 2px solid #dadce0; display: flex; align-items: center; background: #fff; }
.navs { width: 216px; padding-left: 30px; display: flex; gap: 36px; }
.omnibox {
  width: 1872px;
  height: 56px;
  border-radius: 28px;
  padding: 0 20px 0 24px;
  display: flex;
  align-items: center;
  background: #f1f3f4;
  font-size: 27px;
  white-space: nowrap;
}
.insecure { height: 56px; margin-left: 18px; font: 400 28px/54px "Noto Sans CJK TC", sans-serif; letter-spacing: .2px; color: #5f6368; }
.sep { width: 2px; height: 32px; margin: 0 18px 0 15px; background: #9a9da1; }
.url { letter-spacing: .2px; color: #202124; }
.path { color: #6b6f73; }
.star { margin-left: auto; }
.exts { display: flex; align-items: center; gap: 32px; padding-left: 28px; }
.exts svg:nth-child(6) { margin-left: -3px; }
.exts svg:nth-child(7) { margin-left: 9px; }
.g-letter { font: 700 34px Inter, sans-serif; fill: #fff; }
.js-letter { font: 600 56px "Noto Sans", sans-serif; fill: #505050; }

/* page content */
.page { padding: 48px 16px 0; font-family: "Liberation Sans", Arial, sans-serif; font-kerning: none; color: #000; }
h1 {
  margin: 0 0 52px;
  font-size: 64px;
  line-height: 80px;
  font-weight: 400;
  letter-spacing: 2.400px;
  word-spacing: 1.200px;
  -webkit-text-stroke: 2.400px #000;
}
.visit { display: flex; height: 42px; }
.visit label { width: 510px; font-size: 32px; line-height: 39px; letter-spacing: .680px; white-space: nowrap; }
.visit input {
  width: 306px;
  height: 42px;
  padding: 0 0 0 6px;
  border: 2px solid #767676;
  border-radius: 5px;
  outline: none;
  background: #fff;
  font: 26.670px "Liberation Sans", Arial, sans-serif;
}
.visit input::placeholder { color: #757575; }
.go {
  display: block;
  width: 80px;
  height: 42px;
  margin-top: 4px;
  padding: 0 0 1px 1px;
  border: 2px solid #767676;
  border-radius: 6px;
  background: #efefef;
  color: #000;
  font: 26.670px "Liberation Sans", Arial, sans-serif;
}

/* dock */
.dock-area { position: relative; height: 136px; padding: 2px 0 0 90px; }
.wallpaper { position: absolute; left: 0; top: 0; }
.dock {
  position: relative;
  width: 2380px;
  height: 134px;
  padding-left: 7px;
  border-radius: 12px 12px 0 0;
  display: flex;
  background:
    radial-gradient(ellipse 330px 190px at 1930px 134px, #e97d55 0, rgba(226, 122, 86, .75) 45%, transparent 100%),
    radial-gradient(ellipse 200px 120px at 1610px 134px, #79829d, transparent),
    linear-gradient(90deg, #595354 0, #5c5455 400px, #625759 900px, #5d5f6b 1150px, #5e6678 1300px, #696a7a 1500px, #85707a 1680px, #ba7466 1850px, #ae7263 2000px, #856a6c 2150px, #6c6677 2300px, #686c7e 2380px);
  box-shadow: 0 -4px 64px rgba(0, 0, 0, .16);
}
.icon { width: 110px; height: 134px; }
.divider { width: 2px; height: 98px; margin: 18px 24px 0 29px; background: #704b4b; }
.cal-month { font: 400 43px Inter, "Noto Sans CJK TC", sans-serif; fill: #fff; }
.cal-day { font: 300 132px Inter, sans-serif; fill: #222; }
.pages-text { font: 400 28px "Liberation Sans", sans-serif; fill: #fff; letter-spacing: -1px; }
.tiny-num { font: 400 13px "Liberation Sans", sans-serif; fill: #666; }
.keynote-text { font: 700 13px "Liberation Sans", sans-serif; fill: #444; }
.term { font: 700 84px "Noto Sans", sans-serif; fill: #2be52f; }
.line-big { font: 800 58px Inter, sans-serif; fill: #20c120; }
.badge { font: 500 62px Inter, sans-serif; fill: #fff; letter-spacing: -2px; }
```
